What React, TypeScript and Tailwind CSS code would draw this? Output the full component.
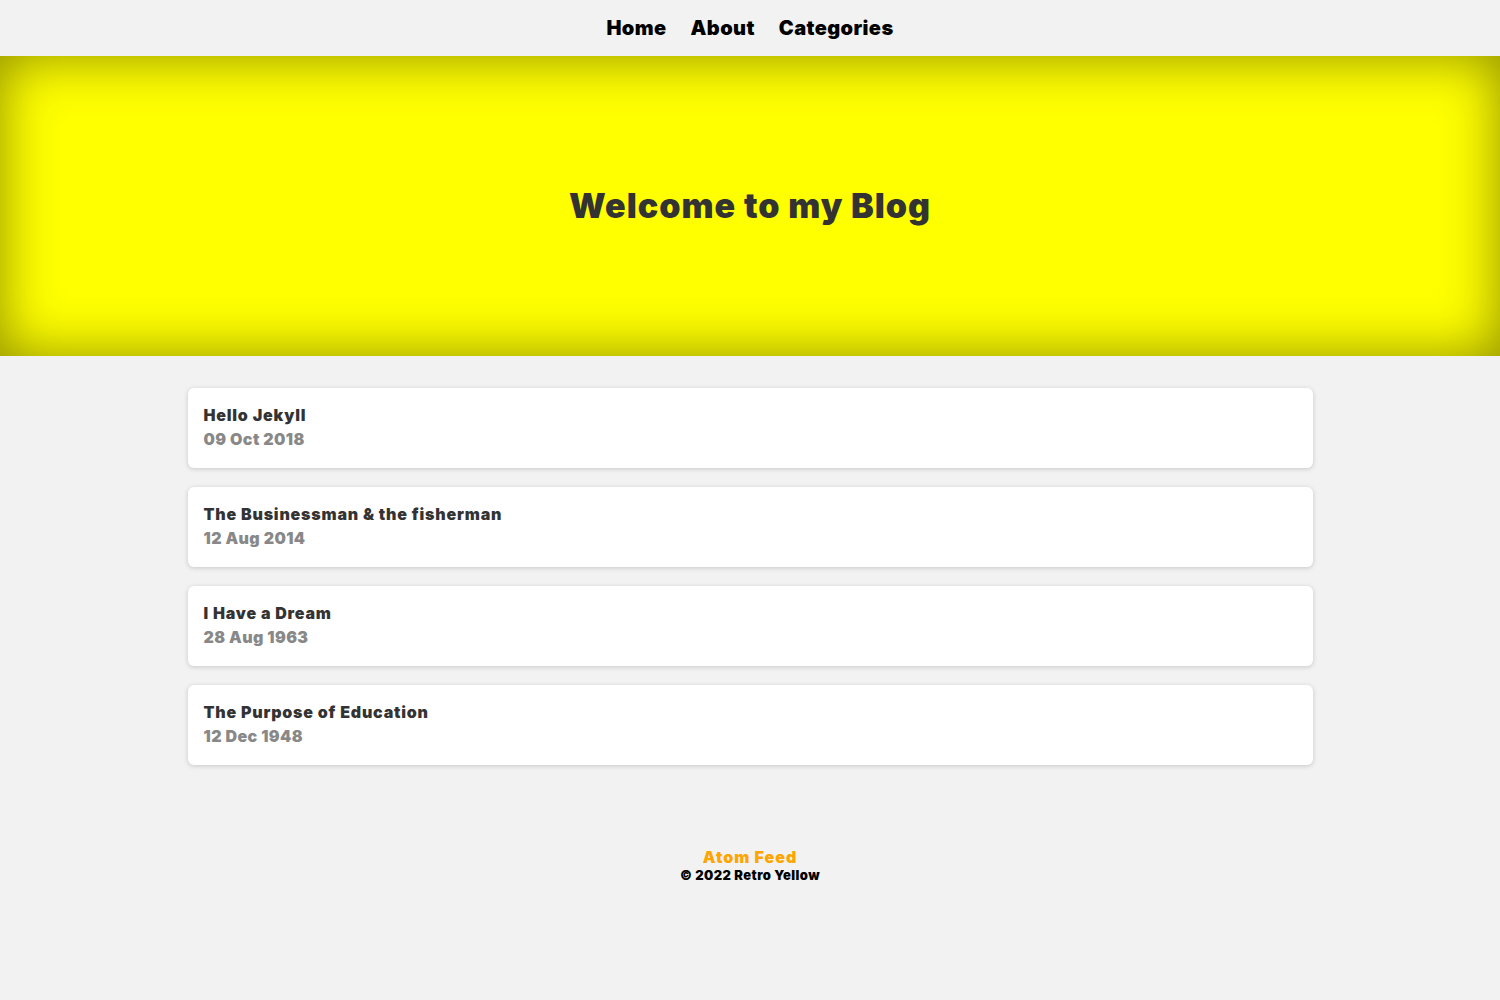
import React from 'react';

interface Post {
  title: string;
  date: string;
}

const posts: Post[] = [
  { title: 'Hello Jekyll', date: '09 Oct 2018' },
  { title: 'The Businessman & the fisherman', date: '12 Aug 2014' },
  { title: 'I Have a Dream', date: '28 Aug 1963' },
  { title: 'The Purpose of Education', date: '12 Dec 1948' },
];

const App: React.FC = () => {
  return (
    <div className="min-h-[1000px] bg-[#f2f2f2] font-['Inter','DejaVu_Sans',sans-serif]">
      {/* navegación */}
      <nav className="h-14 flex items-center justify-center gap-6 text-[20px] font-black text-black tracking-[0.4px]">
        <a href="#">Home</a>
        <a href="#">About</a>
        <a href="#">Categories</a>
      </nav>

      {/* cabecera amarilla */}
      <header className="h-[300px] bg-[#ffff00] shadow-[inset_0_0_55px_rgba(0,0,0,0.45)] flex items-center justify-center">
        <h1 className="text-[34px] font-black text-[#333] tracking-[1px] -mt-[2px]">Welcome to my Blog</h1>
      </header>

      {/* lista de posts */}
      <main className="w-[1125px] mx-auto mt-8 flex flex-col gap-[19px]">
        {posts.map((p) => (
          <div key={p.title} className="h-20 bg-white rounded-md shadow-[0_1px_5px_rgba(0,0,0,0.18)] px-4 pt-[15px]">
            <div className="text-[16px] leading-6 font-black tracking-[0.8px] text-[#333]">{p.title}</div>
            <div className="text-[16px] leading-6 font-black tracking-[0.4px] text-[#888]">{p.date}</div>
          </div>
        ))}
      </main>

      <footer className="mt-[82px] flex flex-col items-center">
        <a href="#" className="text-[16px] leading-5 font-black tracking-[1px] text-[#ffa500]">Atom Feed</a>
        <p className="text-[13px] leading-4 font-black tracking-[0.4px] text-black">© 2022 Retro Yellow</p>
      </footer>
    </div>
  );
};

export default App;
